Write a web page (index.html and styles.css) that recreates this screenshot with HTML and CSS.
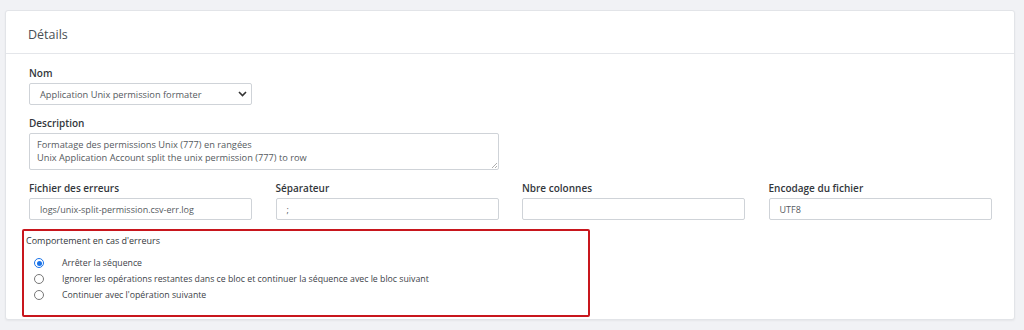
FILE: index.html
```html
<!DOCTYPE html>
<html lang="fr">
<head>
    <meta charset="UTF-8">
    <title>Détails</title>
    <link rel="stylesheet" href="styles.css">
</head>
<body>
    <div class="card">
        <div class="card-header">Détails</div>
        <div class="card-body">
            <div class="grid">
                <div class="field">
                    <label>Nom</label>
                    <div class="select">
                        <span>Application Unix permission formater</span>
                        <svg width="9" height="6" viewBox="0 0 9 6"><path d="M1 1l3.5 3.5L8 1" fill="none" stroke="#333" stroke-width="1.6"/></svg>
                    </div>
                </div>
            </div>
            <div class="grid">
                <div class="field span2">
                    <label>Description</label>
                    <div class="textarea">
                        <div>Formatage des permissions Unix (777) en rangées</div>
                        <div>Unix Application Account split the unix permission (777) to row</div>
                        <svg class="grip" width="6" height="6" viewBox="0 0 6 6"><path d="M6 1L1 6M6 4L4 6" stroke="#999" stroke-width="0.8"/></svg>
                    </div>
                </div>
            </div>
            <div class="grid">
                <div class="field">
                    <label>Fichier des erreurs</label>
                    <div class="input">logs/unix-split-permission.csv-err.log</div>
                </div>
                <div class="field">
                    <label>Séparateur</label>
                    <div class="input">;</div>
                </div>
                <div class="field">
                    <label>Nbre colonnes</label>
                    <div class="input"></div>
                </div>
                <div class="field">
                    <label>Encodage du fichier</label>
                    <div class="input">UTF8</div>
                </div>
            </div>
            <div class="errors">
                <div class="errors-title">Comportement en cas d'erreurs</div>
                <div class="radio"><span class="dot checked"></span>Arrêter la séquence</div>
                <div class="radio"><span class="dot"></span>Ignorer les opérations restantes dans ce bloc et continuer la séquence avec le bloc suivant</div>
                <div class="radio"><span class="dot"></span>Continuer avec l'opération suivante</div>
            </div>
        </div>
    </div>
</body>
</html>
```
FILE: styles.css
```css
* {
    margin: 0;
    padding: 0;
    box-sizing: border-box;
}

body {
    font-family: 'Open Sans', 'Noto Sans', sans-serif;
    background: #f1f2f5;
    padding: 10px 9px 10px 5px;
    color: #3d4248;
}

.card {
    background: white;
    border: 1px solid #e2e4e8;
    border-radius: 3px;
    box-shadow: 0 1px 2px rgba(0,0,0,0.05);
    height: 310px;
}

.card-header {
    height: 43px;
    border-bottom: 1px solid #e4e6ea;
    padding: 15px 0 0 22px;
    font-size: 12.5px;
    color: #4a4f55;
}

.card-body {
    padding: 12px 23px 0 23px;
}

.grid {
    display: grid;
    grid-template-columns: repeat(4, 223px);
    column-gap: 23.5px;
    margin-bottom: 11px;
}

.span2 {
    grid-column: span 2;
}

.field label {
    display: block;
    font-size: 10px;
    font-weight: 600;
    color: #33373c;
    height: 14px;
    line-height: 14px;
    margin-bottom: 3px;
}

.select, .input {
    height: 22px;
    border: 1px solid #cfd3d8;
    border-radius: 2px;
    font-size: 9px;
    color: #555a60;
    padding: 0 10px;
    display: flex;
    align-items: center;
}

.select {
    justify-content: space-between;
    font-size: 9.25px;
    padding-right: 4px;
}

.textarea {
    position: relative;
    height: 37px;
    border: 1px solid #cfd3d8;
    border-radius: 2px;
    font-size: 9.25px;
    line-height: 13px;
    color: #555a60;
    padding: 4px 7px;
}

.grip {
    position: absolute;
    right: 1px;
    bottom: 1px;
}

.errors {
    width: 568px;
    height: 88px;
    margin-top: -2px;
    margin-left: -7px;
    border: 2px solid #c8161d;
    border-radius: 2px;
    padding: 3px 2px;
}

.errors-title {
    font-size: 9px;
    color: #33373c;
    height: 14px;
    line-height: 14px;
    margin-bottom: 7px;
}

.radio {
    display: flex;
    align-items: center;
    height: 16px;
    font-size: 8.75px;
    color: #3d4248;
}

.dot {
    width: 10px;
    height: 10px;
    border: 1px solid #777;
    border-radius: 50%;
    margin: 0 18px 0 8px;
    position: relative;
}

.dot.checked {
    border-color: #1a73e8;
}

.dot.checked::after {
    content: '';
    position: absolute;
    left: 1.5px;
    top: 1.5px;
    width: 5px;
    height: 5px;
    border-radius: 50%;
    background: #1a73e8;
}
```
